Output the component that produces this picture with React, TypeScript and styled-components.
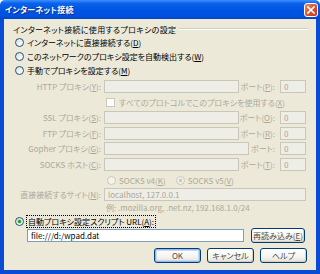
import * as React from 'react';
import styled, { createGlobalStyle } from 'styled-components';

const GlobalStyle = createGlobalStyle`
  html, body {
    margin: 0;
    padding: 0;
    background: #ffffff;
  }
  body {
    font-family: 'Noto Sans CJK JP', 'Noto Sans', sans-serif;
    font-feature-settings: 'palt';
  }
`;

const Window = styled.div`
  width: 320px;
  height: 274px;
  display: flex;
  flex-direction: column;
  overflow: hidden;
`;

const TitleBar = styled.div`
  height: 19px;
  flex: none;
  display: flex;
  align-items: center;
  justify-content: space-between;
  padding: 0 2px 0 5px;
  background: linear-gradient(
    #3d8eff 0%,
    #0a62ea 18%,
    #0055e3 50%,
    #0052e0 80%,
    #0045cc 100%
  );
  border-radius: 5px 5px 0 0;
`;

const Title = styled.span`
  color: #ffffff;
  font-size: 8px;
  font-weight: 700;
  text-shadow: 1px 1px 0 #0a2a8a;
  letter-spacing: 0.2px;
`;

const CloseButton = styled.div`
  width: 14px;
  height: 14px;
  box-sizing: border-box;
  border: 1px solid #ffffff;
  border-radius: 3px;
  background: linear-gradient(135deg, #ec8a6b 0%, #d8502f 55%, #c23b1c 100%);
  display: flex;
  align-items: center;
  justify-content: center;
`;

const Body = styled.div`
  flex: 1;
  background: #ece9d8;
  border: 4px solid #0a4bd6;
  border-top: none;
  padding-top: 4px;
  display: flex;
  flex-direction: column;
`;

const Row = styled.div<{ $h: number; $left?: number; $right?: number }>`
  height: ${({ $h }) => $h}px;
  flex: none;
  display: flex;
  align-items: center;
  padding-left: ${({ $left }) => $left ?? 0}px;
  padding-right: ${({ $right }) => $right ?? 0}px;
  font-size: 8px;
  color: #000000;
  white-space: nowrap;
`;

const GroupTitle = styled.span`
  color: #000000;
  margin-right: 3px;
  letter-spacing: 0.3px;
`;

const GroupLine = styled.div`
  flex: 1;
  height: 1px;
  background: #d0cfbf;
  border-bottom: 1px solid #ffffff;
`;

const Radio = styled.span<{ $checked?: boolean; $disabled?: boolean; $ml?: number }>`
  width: 9px;
  height: 9px;
  flex: none;
  box-sizing: border-box;
  border-radius: 50%;
  border: 1px solid ${({ $disabled }) => ($disabled ? '#cac8bb' : '#1c5180')};
  background: ${({ $disabled }) =>
    $disabled
      ? '#f4f3ee'
      : 'linear-gradient(135deg, #dcdbd4 0%, #f4f3ee 60%, #ffffff 100%)'};
  display: flex;
  align-items: center;
  justify-content: center;
  margin-left: ${({ $ml }) => $ml ?? 0}px;
  margin-right: 3px;
  &::after {
    content: '';
    display: ${({ $checked }) => ($checked ? 'block' : 'none')};
    width: 3px;
    height: 3px;
    border-radius: 50%;
    background: ${({ $disabled }) => ($disabled ? '#cac8bb' : '#21a121')};
    box-shadow: 0 0 0 0.5px
      ${({ $disabled }) => ($disabled ? '#d8d6cb' : '#5fc85f')};
  }
`;

const Checkbox = styled.span`
  width: 9px;
  height: 9px;
  flex: none;
  box-sizing: border-box;
  border: 1px solid #cac8bb;
  background: #ffffff;
  margin-right: 4px;
`;

const Text = styled.span<{ $disabled?: boolean; $focus?: boolean }>`
  color: ${({ $disabled }) => ($disabled ? '#aca899' : '#000000')};
  outline: ${({ $focus }) => ($focus ? '1px dotted #000000' : 'none')};
  outline-offset: 0;
  padding: ${({ $focus }) => ($focus ? '0 1px' : '0')};
`;

const FieldLabel = styled.span<{ $width: number }>`
  width: ${({ $width }) => $width}px;
  flex: none;
  text-align: right;
  padding-right: 3px;
  box-sizing: border-box;
  color: #aca899;
`;

const PortLabel = styled.span`
  flex: 1;
  text-align: right;
  padding-right: 5px;
  color: #aca899;
`;

const Field = styled.div<{ $width?: number; $disabled?: boolean }>`
  ${({ $width }) => ($width ? `width: ${$width}px; flex: none;` : 'flex: 1;')}
  height: 13px;
  box-sizing: border-box;
  border: 1px solid ${({ $disabled }) => ($disabled ? '#c9c7ba' : '#7f9db9')};
  background: ${({ $disabled }) => ($disabled ? '#eeede6' : '#ffffff')};
  color: ${({ $disabled }) => ($disabled ? '#aca899' : '#000000')};
  display: flex;
  align-items: center;
  padding-left: 3px;
  font-size: 8px;
  overflow: hidden;
`;

const Button = styled.div<{ $width: number; $default?: boolean; $ml?: number }>`
  width: ${({ $width }) => $width}px;
  height: 15px;
  flex: none;
  box-sizing: border-box;
  margin-left: ${({ $ml }) => $ml ?? 0}px;
  border: 1px solid #003c74;
  border-radius: 3px;
  background: linear-gradient(#ffffff 0%, #f5f4ee 60%, #e3e2d8 100%);
  box-shadow: ${({ $default }) =>
    $default
      ? 'inset 0 0 0 1px #98b8ea, inset 0 0 0 2px #c6d8f4'
      : 'inset -1px -1px 0 #d6d0c5'};
  display: flex;
  align-items: center;
  justify-content: center;
  font-size: 8px;
  color: #4a4a4a;
`;

const ButtonBar = styled.div`
  display: flex;
  gap: 6px;
  justify-content: flex-end;
  padding-right: 9px;
  margin-top: 6px;
  height: 15px;
`;

const A = ({ k }: { k: string }) => (
  <>
    (<u>{k}</u>)
  </>
);

const proxies = [
  { label: 'HTTP プロキシ', key: 'Y', port: 'P' },
  { label: 'SSL プロキシ', key: 'S', port: 'O' },
  { label: 'FTP プロキシ', key: 'F', port: 'R' },
];

export default function App() {
  return (
    <Window>
      <GlobalStyle />
      <TitleBar>
        <Title>インターネット接続</Title>
        <CloseButton>
          <svg width="8" height="8" viewBox="0 0 8 8">
            <path d="M1 1 L7 7 M7 1 L1 7" stroke="#ffffff" strokeWidth="1.6" strokeLinecap="square" />
          </svg>
        </CloseButton>
      </TitleBar>
      <Body>
        <Row $h={12} $left={9} $right={8}>
          <GroupTitle>インターネット接続に使用するプロキシの設定</GroupTitle>
          <GroupLine />
        </Row>
        <Row $h={14} $left={11}>
          <Radio />
          <Text>インターネットに直接接続する<A k="D" /></Text>
        </Row>
        <Row $h={14} $left={11}>
          <Radio />
          <Text>このネットワークのプロキシ設定を自動検出する<A k="W" /></Text>
        </Row>
        <Row $h={15} $left={11}>
          <Radio />
          <Text>手動でプロキシを設定する<A k="M" /></Text>
        </Row>

        <Row $h={17} $left={10} $right={10}>
          <FieldLabel $width={90}>
            {proxies[0].label}<A k={proxies[0].key} />:
          </FieldLabel>
          <Field $width={135} $disabled />
          <PortLabel>ポート<A k={proxies[0].port} />:</PortLabel>
          <Field $width={26} $disabled>0</Field>
        </Row>
        <Row $h={14} $left={102}>
          <Checkbox />
          <Text $disabled>すべてのプロトコルでこのプロキシを使用する<A k="X" /></Text>
        </Row>
        {proxies.slice(1).map((p, i) => (
          <Row key={p.key} $h={i === 0 ? 17 : 15} $left={10} $right={10}>
            <FieldLabel $width={90}>
              {p.label}<A k={p.key} />:
            </FieldLabel>
            <Field $width={135} $disabled />
            <PortLabel>ポート<A k={p.port} />:</PortLabel>
            <Field $width={26} $disabled>0</Field>
          </Row>
        ))}
        <Row $h={15} $left={10} $right={10}>
          <FieldLabel $width={90}>
            Gopher プロキシ<A k="G" />:
          </FieldLabel>
          <Field $width={145} $disabled />
          <PortLabel>ポート:</PortLabel>
          <Field $width={26} $disabled>0</Field>
        </Row>
        <Row $h={16} $left={10} $right={10}>
          <FieldLabel $width={90}>
            SOCKS ホスト<A k="C" />:
          </FieldLabel>
          <Field $width={135} $disabled />
          <PortLabel>ポート<A k="T" />:</PortLabel>
          <Field $width={26} $disabled>0</Field>
        </Row>
        <Row $h={16} $left={103}>
          <Radio $disabled />
          <Text $disabled>SOCKS v4<A k="K" /></Text>
          <Radio $disabled $checked $ml={10} />
          <Text $disabled>SOCKS v5<A k="V" /></Text>
        </Row>
        <Row $h={13} $left={10} $right={10}>
          <FieldLabel $width={90}>
            直接接続するサイト<A k="N" />:
          </FieldLabel>
          <Field $disabled>localhost, 127.0.0.1</Field>
        </Row>
        <Row $h={12} $left={102}>
          <Text $disabled>例: .mozilla.org, .net.nz, 192.168.1.0/24</Text>
        </Row>
        <Row $h={16} $left={11}>
          <Radio $checked />
          <Text $focus>自動プロキシ設定スクリプト URL<A k="A" />:</Text>
        </Row>
        <Row $h={13} $left={23} $right={11}>
          <Field>file:///d:/wpad.dat</Field>
          <Button $width={54} $ml={7}>
            再読み込み<A k="E" />
          </Button>
        </Row>
        <ButtonBar>
          <Button $width={47} $default>OK</Button>
          <Button $width={47}>キャンセル</Button>
          <Button $width={47}>ヘルプ</Button>
        </ButtonBar>
      </Body>
    </Window>
  );
}
